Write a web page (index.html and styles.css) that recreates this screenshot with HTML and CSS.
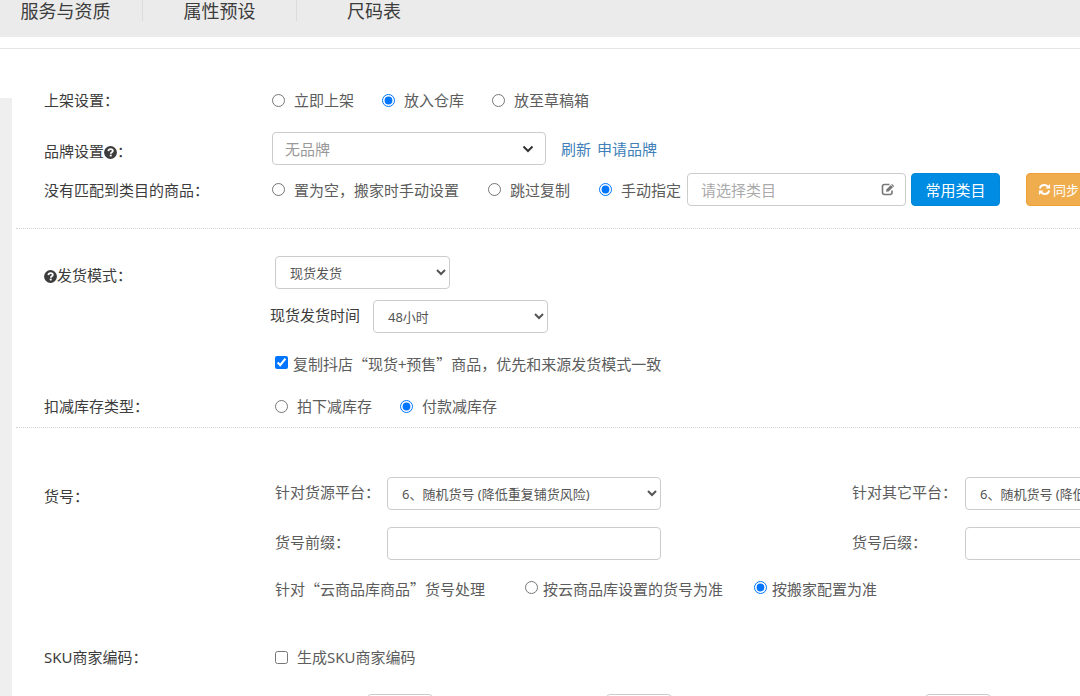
FILE: index.html
```html
<!DOCTYPE html>
<html lang="zh-CN">
<head>
<meta charset="utf-8">
<title>商品设置</title>
<link rel="stylesheet" href="styles.css">
</head>
<body>
<svg class="defs" aria-hidden="true">
  <symbol id="help" viewBox="0 0 14 14">
    <circle cx="7" cy="7" r="6.900" fill="currentColor"/>
    <path d="M4.700 5.500C4.800 3.900 5.800 3.300 7.100 3.300C8.500 3.300 9.500 4.100 9.500 5.300C9.500 6.800 7.300 6.800 7.300 8.400" fill="none" stroke="#fff" stroke-width="1.900"/>
    <rect x="6.200" y="9.300" width="2.100" height="1.900" fill="#fff"/>
  </symbol>
</svg>
<header class="topbar">
  <nav class="tabs">
    <a class="tab" href="#service">服务与资质</a>
    <a class="tab" href="#attrs">属性预设</a>
    <a class="tab" href="#size">尺码表</a>
  </nav>
</header>
<main class="page">
  <div class="rail"></div>
  <form class="content">
    <section class="section listing">
      <div class="row tall">
        <span class="name">上架设置：</span>
        <div class="options">
          <label class="option"><input type="radio" name="shelf">立即上架</label>
          <label class="option"><input type="radio" name="shelf" checked>放入仓库</label>
          <label class="option"><input type="radio" name="shelf">放至草稿箱</label>
        </div>
      </div>
      <div class="row">
        <label class="name low" for="brand">品牌设置<svg class="help"><use href="#help"/></svg>：</label>
        <div class="field">
          <span class="brand-box">
            <select id="brand" class="control brand"><option>无品牌</option></select>
            <svg class="chevron" viewBox="0 0 12 8"><path d="M1.500 1.500L6 6L10.500 1.500" fill="none" stroke="#333" stroke-width="2"/></svg>
          </span>
          <span class="links"><a href="#refresh">刷新</a><a href="#apply">申请品牌</a></span>
        </div>
      </div>
      <div class="row">
        <span class="name">没有匹配到类目的商品：</span>
        <div class="field">
          <div class="options wide">
            <label class="option"><input type="radio" name="cat">置为空，搬家时手动设置</label>
            <label class="option"><input type="radio" name="cat">跳过复制</label>
            <label class="option"><input type="radio" name="cat" checked>手动指定</label>
          </div>
          <span class="picker">
            <input class="control picker-input" type="text" placeholder="请选择类目" aria-label="请选择类目">
            <svg class="edit" viewBox="0 0 14 13"><path d="M8.500 1.500H3.500Q1.500 1.500 1.500 3.500V9.500Q1.500 11.500 3.500 11.500H9Q11 11.500 11 9.500V7.500" fill="none" stroke="currentColor" stroke-width="1.600"/><path d="M5 8.800L5.500 6.300L11 .9L13.200 3L7.600 8.500Z" fill="currentColor"/><path d="M10 1.900L12.200 4" stroke="#fff" stroke-width=".7"/></svg>
          </span>
          <button class="button primary" type="button">常用类目</button>
          <button class="button warning" type="button"><svg class="sync" viewBox="0 0 14 14"><path d="M2 6Q2.800 2.200 6.900 2.200Q9 2.200 10.500 3.700M12 8Q11.200 11.800 7.100 11.800Q5 11.800 3.500 10.300" fill="none" stroke="currentColor" stroke-width="2.200"/><path d="M13 1V6H8ZM1 13V8H6Z" fill="currentColor"/></svg>同步</button>
        </div>
      </div>
    </section>

    <section class="section shipping">
      <div class="row">
        <label class="name low" for="mode"><svg class="help"><use href="#help"/></svg>发货模式：</label>
        <div class="field"><select id="mode" class="control medium"><option>现货发货</option></select></div>
      </div>
      <div class="row time-row">
        <div class="field time">
          <label class="time-name" for="time">现货发货时间</label>
          <select id="time" class="control medium"><option>48小时</option></select>
        </div>
      </div>
      <div class="row copy-row">
        <label class="option near"><input type="checkbox" checked>复制抖店“现货+预售”商品，优先和来源发货模式一致</label>
      </div>
      <div class="row">
        <span class="name">扣减库存类型：</span>
        <div class="options">
          <label class="option"><input type="radio" name="stock">拍下减库存</label>
          <label class="option"><input type="radio" name="stock" checked>付款减库存</label>
        </div>
      </div>
    </section>

    <section class="section codes">
      <div class="row top">
        <span class="name first">货号：</span>
        <div class="code-fields">
          <div class="pairs">
            <label for="src">针对货源平台：</label>
            <select id="src" class="control"><option>6、随机货号 (降低重复铺货风险)</option></select>
            <label class="second" for="other">针对其它平台：</label>
            <select id="other" class="control"><option>6、随机货号 (降低重复铺货风险)</option></select>
            <label for="prefix">货号前缀：</label>
            <input id="prefix" class="control" type="text">
            <label class="second" for="suffix">货号后缀：</label>
            <input id="suffix" class="control" type="text">
          </div>
          <div class="cloud">
            <span class="cloud-name">针对“云商品库商品”货号处理</span>
            <label class="option near"><input type="radio" name="cloud">按云商品库设置的货号为准</label>
            <label class="option near"><input type="radio" name="cloud" checked>按搬家配置为准</label>
          </div>
        </div>
      </div>
      <div class="row sku">
        <span class="name"><span class="latin">SKU</span>商家编码：</span>
        <label class="option"><input type="checkbox"><span>生成<span class="latin">SKU</span>商家编码</span></label>
      </div>
      <div class="parts">
        <input class="control" type="text" aria-label="编码前缀">
        <input class="control" type="text" aria-label="编码中段">
        <input class="control" type="text" aria-label="编码后缀">
      </div>
    </section>
  </form>
</main>
</body>
</html>
```
FILE: styles.css
```css
* { box-sizing: border-box; }

body {
  margin: 0;
  height: 100vh;
  overflow: hidden;
  background: #fff;
  color: #5c5c5c;
  font: 15px/24px "Noto Sans CJK SC", sans-serif;
  white-space: nowrap;
}

input, select, button { font-family: inherit; margin: 0; }
.latin { font-family: "Noto Sans", sans-serif; }
.defs { display: none; }

.topbar { height: 37px; background: #ebebeb; }
.tabs { display: flex; margin-left: -11px; }
.tab {
  width: 154px;
  height: 21px;
  border-right: 1px solid #dcdcdc;
  color: #3c3c3c;
  font-size: 18px;
  line-height: 20px;
  text-align: center;
  text-decoration: none;
}
.tab:last-child { border-right: 0; }

.page {
  display: flex;
  margin-top: 11px;
  border-top: 1px solid #e4e4e4;
}
.rail { flex: 0 0 12px; margin-top: 49px; background: #efefef; }
.content { flex: 1; min-width: 0; padding-left: 4px; }

.section { padding-left: 28px; }
.listing { padding-top: 34px; padding-bottom: 22px; border-bottom: 1px dotted #d4d4d4; }
.shipping { padding-top: 27px; padding-bottom: 9px; border-bottom: 1px dotted #d4d4d4; }
.codes { padding-top: 49px; }

.row {
  display: grid;
  grid-template-columns: 231px 1fr;
  align-items: center;
}
.listing .row { grid-template-columns: 228px 1fr; }
.tall { height: 34px; margin-bottom: 15px; }
.listing .row + .row + .row { margin-top: 8px; }
.time-row { margin-top: 11px; }
.time-row > *, .copy-row > * { grid-column: 2; }
.copy-row { margin: 19px 0 18px; }
.top { align-items: start; }

.name { color: #3c3c3c; }
.low { align-self: end; line-height: 28px; }
.first { line-height: 38px; }
.help { width: 13px; height: 13px; vertical-align: -2px; }

.options { display: flex; gap: 28px; }
.wide { gap: 29px; }
.option { display: flex; align-items: center; gap: 9px; }
.near { gap: 5px; }
.option input { width: 13px; height: 13px; }
.near input { align-self: flex-start; margin-top: 4px; }
.field { display: flex; align-items: center; }

.control {
  height: 33px;
  border: 1px solid #ccc;
  border-radius: 4px;
  padding: 0 12px 0 10px;
  background: #fff;
  color: #555;
  font-family: "Noto Sans", "Noto Sans CJK SC", sans-serif;
  font-size: 13px;
}
select.control { padding-right: 2px; border-right-width: 1px; }
.medium { width: 175px; }
.time { margin-left: -5px; }
.time-name { width: 103px; padding-bottom: 3px; color: #3c3c3c; }

.brand-box, .picker { position: relative; display: flex; }
select.brand { width: 274px; padding: 0 12px; appearance: none; color: #999; font-size: 15px; }
.chevron { position: absolute; right: 12px; top: 13px; width: 12px; height: 8px; pointer-events: none; }
.links { display: flex; gap: 6px; margin-left: 15px; }
.links a { color: #4080b8; text-decoration: none; }

.picker { margin: 0 5px 0 6px; }
.picker-input { width: 219px; padding: 0 36px 0 13px; font-size: 15px; }
.picker-input::placeholder { color: #aaa; }
.edit { position: absolute; right: 11px; top: 10px; width: 14px; height: 13px; color: #777; }

.button {
  height: 33px;
  border: 1px solid;
  border-radius: 4px;
  color: #fff;
}
.primary { width: 89px; padding: 0; background: #008ce2; border-color: #0087da; font-size: 15px; }
.warning {
  display: flex;
  align-items: center;
  gap: 2px;
  margin-left: 26px;
  padding: 0 11px;
  background: #f0ad4e;
  border-color: #eea236;
  font-size: 13px;
}
.sync { width: 13px; height: 13px; }

.pairs {
  display: grid;
  grid-template-columns: 112px 274px 304px 274px;
  row-gap: 17px;
  align-items: center;
}
.pairs label { padding-bottom: 3px; }
.second { padding-left: 191px; }
.cloud { display: flex; margin-top: 17px; }
.cloud-name { margin-right: 40px; }
.cloud .option + .option { margin-left: 31px; }
.sku { margin-top: 44px; }
.parts { display: flex; padding-left: 323px; margin-top: 25px; }
.parts .control { flex: none; width: 66px; }
.parts .control:nth-child(2) { margin-left: 173px; }
.parts .control:nth-child(3) { margin-left: 253px; }
```
